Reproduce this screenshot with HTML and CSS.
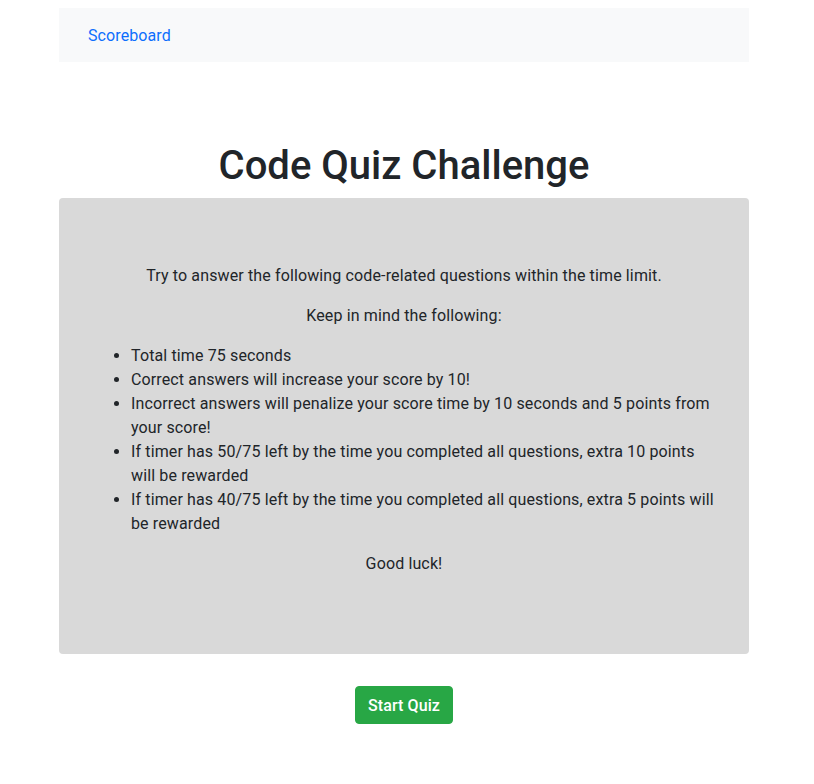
FILE: index.html
```html
<!DOCTYPE html>
<html lang="en">
<head>
<meta charset="utf-8">
<title>Code Quiz</title>
<link rel="stylesheet" href="styles.css">
</head>
<body>
<div class="container">
  <nav class="navbar">
    <a class="nav-link" href="#">Scoreboard</a>
  </nav>
  <main class="main">
    <h1 class="title">Code Quiz Challenge</h1>
    <section class="intro">
      <p>Try to answer the following code-related questions within the time limit.</p>
      <p>Keep in mind the following:</p>
      <ul class="rules">
        <li>Total time 75 seconds</li>
        <li>Correct answers will increase your score by 10!</li>
        <li>Incorrect answers will penalize your score time by 10 seconds and 5 points from your score!</li>
        <li>If timer has 50/75 left by the time you completed all questions, extra 10 points will be rewarded</li>
        <li>If timer has 40/75 left by the time you completed all questions, extra 5 points will be rewarded</li>
      </ul>
      <p>Good luck!</p>
    </section>
    <div class="actions">
      <button class="btn-start" type="button">Start Quiz</button>
    </div>
  </main>
</div>
</body>
</html>
```
FILE: styles.css
```css
* { box-sizing: border-box; }
body {
  margin: 0;
  padding-top: 8px;
  font-family: Roboto, "Helvetica Neue", Arial, sans-serif;
  font-size: 16px;
  line-height: 1.5;
  color: #212529;
  background: #fff;
}
.container {
  width: 690px;
  margin: 0 0 0 59px;
}
.navbar {
  background: #f8f9fa;
  height: 54px;
  display: flex;
  align-items: center;
  padding: 2px 29px 0;
}
.nav-link {
  color: #0d6efd;
  text-decoration: none;
  letter-spacing: 0.1px;
}
.main {
  padding-top: 80px;
}
.title {
  margin: 0 0 8px;
  font-size: 40px;
  font-weight: 500;
  line-height: 48px;
  text-align: center;
}
.intro {
  background: #d9d9d9;
  border-radius: 4px;
  padding: 66px 32px 62px;
  text-align: center;
  letter-spacing: 0.13px;
}
.intro p {
  margin: 0 0 16px;
}
.rules {
  text-align: left;
  margin: 0 0 16px;
  padding-left: 40px;
}
.actions {
  display: flex;
  justify-content: center;
  padding-top: 32px;
}
.btn-start {
  font-family: inherit;
  font-size: 16px;
  line-height: 24px;
  padding: 7px 12px 5px;
  color: #fff;
  background: #28a745;
  border: 1px solid #28a745;
  border-radius: 4px;
  font-weight: 500;
  letter-spacing: 0.1px;
}
```
